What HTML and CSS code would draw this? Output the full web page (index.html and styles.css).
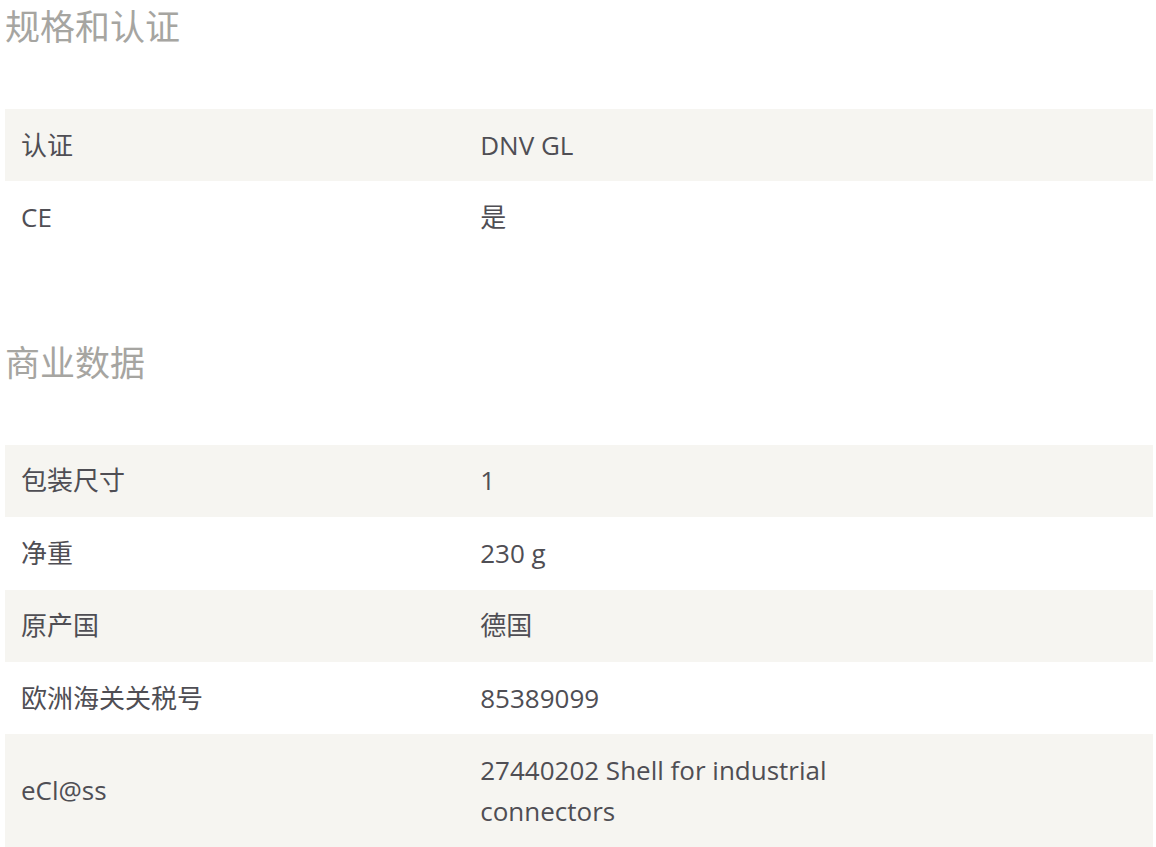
FILE: index.html
```html
<!DOCTYPE html>
<html>
  <head>
    <meta name="viewport" content="width=device-width, initial-scale=1" />
    <link rel="stylesheet" href="styles.css">
  </head>

  <body>
    <div class="page">

      <div class="spec-section">
        <h2 class="spec-title">规格和认证</h2>
        <table class="spec-table">
          <colgroup>
            <col class="col-label" />
            <col class="col-value" />
            <col />
          </colgroup>
          <tr>
            <td>认证</td>
            <td>DNV GL</td>
            <td></td>
          </tr>
          <tr>
            <td>CE</td>
            <td>是</td>
            <td></td>
          </tr>
        </table>
      </div>

      <div class="spec-section">
        <h2 class="spec-title">商业数据</h2>
        <table class="spec-table">
          <colgroup>
            <col class="col-label" />
            <col class="col-value" />
            <col />
          </colgroup>
          <tr>
            <td>包装尺寸</td>
            <td>1</td>
            <td></td>
          </tr>
          <tr>
            <td>净重</td>
            <td>230 g</td>
            <td></td>
          </tr>
          <tr>
            <td>原产国</td>
            <td>德国</td>
            <td></td>
          </tr>
          <tr>
            <td>欧洲海关关税号</td>
            <td>85389099</td>
            <td></td>
          </tr>
          <tr>
            <td>eCl@ss</td>
            <td>27440202 Shell for industrial connectors</td>
            <td></td>
          </tr>
        </table>
      </div>

    </div>
  </body>
</html>
```

FILE: styles.css
```css
  body {
    margin: 0;
    font-family: "Open Sans", "Noto Sans CJK SC", sans-serif;
    color: #4f4e54;
    background: #fff;
  }

  .page {
    padding-left: 5px;
    width: 1148px;
  }

  .spec-section {
    margin-bottom: 82px;
  }

  .spec-title {
    margin: 0 0 55px 0;
    font-size: 35px;
    line-height: 54px;
    font-weight: normal;
    color: #a6a5a1;
  }

  .spec-table {
    width: 100%;
    border-collapse: collapse;
    table-layout: fixed;
    font-size: 26px;
    line-height: 41px;
  }

  .col-label,
  .col-value {
    width: 40%;
  }

  .spec-table td {
    padding: 15.7px 16px;
    vertical-align: middle;
  }

  .spec-table tr:nth-child(odd) {
    background-color: #f6f5f1;
  }
```
